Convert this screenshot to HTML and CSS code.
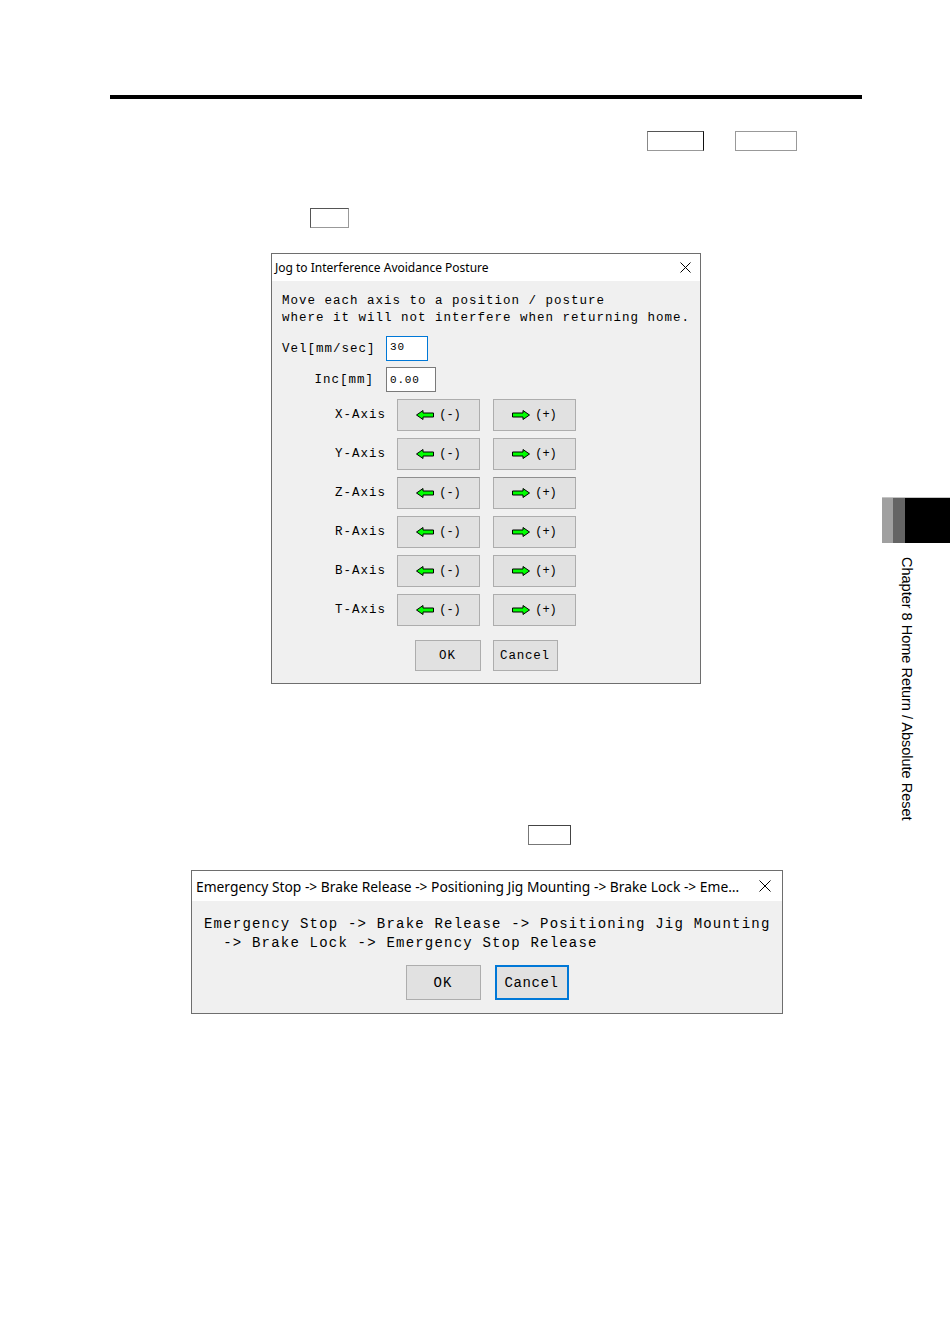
FILE: index.html
```html
<!DOCTYPE html>
<html lang="en">
<head>
    <meta charset="UTF-8">
    <title>Home Return / Absolute Reset</title>
    <link rel="stylesheet" href="styles.css">
</head>
<body>

<div class="page">
    <div class="content">
        <div class="top-rule"></div>

        <!-- key caps referenced in the text -->
        <div class="key-row row-1">
            <span class="key key-a"></span>
            <span class="key key-b"></span>
        </div>
        <div class="key-row row-2">
            <span class="key key-c"></span>
        </div>

        <!-- Jog dialog -->
        <div class="dialog jog-dialog">
            <div class="title-bar">
                <span class="title">Jog to Interference Avoidance Posture</span>
                <svg class="close" width="11" height="11" viewBox="0 0 11 11"><path d="M0.5 0.5L10.5 10.5M10.5 0.5L0.5 10.5" stroke="#000" stroke-width="1" fill="none"/></svg>
            </div>
            <div class="jog-body">
                <p class="message">Move each axis to a position / posture
where it will not interfere when returning home.</p>

                <div class="field">
                    <span class="field-label">Vel[mm/sec]</span>
                    <div class="input focused">30</div>
                </div>
                <div class="field">
                    <span class="field-label">Inc[mm]</span>
                    <div class="input wide">0.00</div>
                </div>

                <div class="axis-row">
                    <span class="axis-name">X-Axis</span>
                    <button class="jog-btn"><svg width="18" height="10" viewBox="0 0 18 10"><path d="M0.5 5L7 0.5V3H17.5V7H7V9.5Z" fill="#00ff00" stroke="#000"/></svg>(-)</button>
                    <button class="jog-btn"><svg width="18" height="10" viewBox="0 0 18 10"><path d="M17.5 5L11 0.5V3H0.5V7H11V9.5Z" fill="#00ff00" stroke="#000"/></svg>(+)</button>
                </div>
                <div class="axis-row">
                    <span class="axis-name">Y-Axis</span>
                    <button class="jog-btn"><svg width="18" height="10" viewBox="0 0 18 10"><path d="M0.5 5L7 0.5V3H17.5V7H7V9.5Z" fill="#00ff00" stroke="#000"/></svg>(-)</button>
                    <button class="jog-btn"><svg width="18" height="10" viewBox="0 0 18 10"><path d="M17.5 5L11 0.5V3H0.5V7H11V9.5Z" fill="#00ff00" stroke="#000"/></svg>(+)</button>
                </div>
                <div class="axis-row">
                    <span class="axis-name">Z-Axis</span>
                    <button class="jog-btn hot"><svg width="18" height="10" viewBox="0 0 18 10"><path d="M0.5 5L7 0.5V3H17.5V7H7V9.5Z" fill="#00ff00" stroke="#000"/></svg>(-)</button>
                    <button class="jog-btn hot"><svg width="18" height="10" viewBox="0 0 18 10"><path d="M17.5 5L11 0.5V3H0.5V7H11V9.5Z" fill="#00ff00" stroke="#000"/></svg>(+)</button>
                </div>
                <div class="axis-row">
                    <span class="axis-name">R-Axis</span>
                    <button class="jog-btn"><svg width="18" height="10" viewBox="0 0 18 10"><path d="M0.5 5L7 0.5V3H17.5V7H7V9.5Z" fill="#00ff00" stroke="#000"/></svg>(-)</button>
                    <button class="jog-btn"><svg width="18" height="10" viewBox="0 0 18 10"><path d="M17.5 5L11 0.5V3H0.5V7H11V9.5Z" fill="#00ff00" stroke="#000"/></svg>(+)</button>
                </div>
                <div class="axis-row">
                    <span class="axis-name">B-Axis</span>
                    <button class="jog-btn"><svg width="18" height="10" viewBox="0 0 18 10"><path d="M0.5 5L7 0.5V3H17.5V7H7V9.5Z" fill="#00ff00" stroke="#000"/></svg>(-)</button>
                    <button class="jog-btn"><svg width="18" height="10" viewBox="0 0 18 10"><path d="M17.5 5L11 0.5V3H0.5V7H11V9.5Z" fill="#00ff00" stroke="#000"/></svg>(+)</button>
                </div>
                <div class="axis-row">
                    <span class="axis-name">T-Axis</span>
                    <button class="jog-btn"><svg width="18" height="10" viewBox="0 0 18 10"><path d="M0.5 5L7 0.5V3H17.5V7H7V9.5Z" fill="#00ff00" stroke="#000"/></svg>(-)</button>
                    <button class="jog-btn"><svg width="18" height="10" viewBox="0 0 18 10"><path d="M17.5 5L11 0.5V3H0.5V7H11V9.5Z" fill="#00ff00" stroke="#000"/></svg>(+)</button>
                </div>

                <div class="jog-actions">
                    <button class="btn-ok">OK</button>
                    <button class="btn-cancel">Cancel</button>
                </div>
            </div>
        </div>

        <div class="key-row row-3">
            <span class="key key-d"></span>
        </div>

        <!-- Confirmation dialog -->
        <div class="dialog confirm-dialog">
            <div class="title-bar">
                <span class="title">Emergency Stop -&gt; Brake Release -&gt; Positioning Jig Mounting -&gt; Brake Lock -&gt; Eme…</span>
                <svg class="close" width="12" height="12" viewBox="0 0 12 12"><path d="M0.5 0.5L11.5 11.5M11.5 0.5L0.5 11.5" stroke="#000" stroke-width="1" fill="none"/></svg>
            </div>
            <div class="confirm-body">
                <p class="message">Emergency Stop -&gt; Brake Release -&gt; Positioning Jig Mounting
  -&gt; Brake Lock -&gt; Emergency Stop Release</p>
                <div class="confirm-actions">
                    <button class="btn-ok">OK</button>
                    <button class="btn-cancel focused">Cancel</button>
                </div>
            </div>
        </div>
    </div>

    <!-- chapter tab on the page edge -->
    <div class="side">
        <div class="tab">
            <span class="tab-light"></span>
            <span class="tab-mid"></span>
            <span class="tab-dark"></span>
        </div>
        <div class="chapter">Chapter 8 Home Return / Absolute Reset</div>
    </div>
</div>

</body>
</html>
```

FILE: styles.css
```css
* {
    margin: 0;
    padding: 0;
    box-sizing: border-box;
}

body {
    width: 950px;
    height: 1344px;
    background-color: #fff;
    color: #000;
    font-family: "Liberation Sans", Arial, sans-serif;
    overflow: hidden;
}

.page {
    display: flex;
}

.content {
    width: 752px;
    margin-left: 110px;
    padding-top: 95px;
}

.top-rule {
    height: 4px;
    background-color: #000;
}

/* key caps */
.key-row {
    display: flex;
    height: 20px;
}

.row-1 {
    margin-top: 32px;
    padding-left: 537px;
    gap: 31px;
}

.row-2 {
    margin-top: 57px;
    padding-left: 200px;
}

.row-3 {
    margin-top: 141px;
    padding-left: 418px;
}

.key {
    height: 20px;
    border: 1px solid #8c8c8c;
    background-color: #fff;
}

.key-a {
    width: 57px;
    border-color: #555 #111 #999 #888;
}

.key-b {
    width: 62px;
    border-color: #999;
}

.key-c {
    width: 39px;
    border-color: #555 #999 #999 #555;
}

.key-d {
    width: 43px;
    border-color: #444 #444 #777 #777;
}

/* dialogs */
.dialog {
    border: 1px solid #6e6e6e;
    background-color: #f0f0f0;
}

.jog-dialog {
    margin-top: 25px;
    margin-left: 161px;
    width: 430px;
}

.confirm-dialog {
    margin-top: 25px;
    margin-left: 81px;
    width: 592px;
}

.title-bar {
    display: flex;
    align-items: center;
    justify-content: space-between;
    background-color: #fff;
    font-family: "Noto Sans", sans-serif;
    white-space: nowrap;
}

.jog-dialog .title-bar {
    height: 27px;
    padding: 0 9px 0 3px;
    font-size: 12px;
}

.confirm-dialog .title-bar {
    height: 30px;
    padding: 0 11px 0 4px;
    font-size: 13.8px;
}

.message {
    white-space: pre;
}

button {
    font: inherit;
    letter-spacing: inherit;
    color: #000;
    background-color: #e1e1e1;
    border: 1px solid #adadad;
    display: flex;
    align-items: center;
    justify-content: center;
}

/* jog dialog body */
.jog-body {
    padding: 12px 10px 12px 10px;
    font-family: "Liberation Mono", monospace;
    font-size: 12.5px;
    letter-spacing: 1px;
}

.jog-body .message {
    line-height: 17px;
    margin-bottom: 9px;
}

.field {
    display: flex;
    align-items: center;
    height: 25px;
}

.field + .field {
    margin-top: 6px;
}

.field-label {
    width: 92px;
    margin-right: 12px;
    text-align: right;
}

.input {
    height: 25px;
    background-color: #fff;
    border: 1px solid #7a7a7a;
    font-size: 11px;
    letter-spacing: 0.8px;
    padding: 5px 0 0 3px;
    line-height: 12px;
}

.input.focused {
    width: 42px;
    border-color: #0078d7;
    padding-top: 4px;
}

.input.wide {
    width: 50px;
    padding-top: 6px;
}

.axis-row {
    display: flex;
    align-items: center;
    height: 32px;
    margin-top: 7px;
}

.axis-name {
    width: 104px;
    margin-right: 11px;
    text-align: right;
}

.jog-btn {
    width: 83px;
    height: 32px;
    gap: 5px;
    font-size: 12px;
    letter-spacing: 0;
}

.jog-btn + .jog-btn {
    margin-left: 13px;
}

.jog-btn.hot {
    border-top-color: #8f8f8f;
}

.jog-actions {
    display: flex;
    justify-content: center;
    gap: 12px;
    margin-top: 14px;
}

.jog-actions .btn-ok {
    width: 66px;
    height: 31px;
}

.jog-actions .btn-cancel {
    width: 65px;
    height: 31px;
    letter-spacing: 0.8px;
}

/* confirmation dialog body */
.confirm-body {
    padding: 14px 12px 13px 12px;
    font-family: "Liberation Mono", monospace;
    font-size: 14px;
    letter-spacing: 1.2px;
}

.confirm-body .message {
    line-height: 19px;
}

.confirm-actions {
    display: flex;
    justify-content: center;
    gap: 14px;
    margin-top: 12px;
}

.confirm-actions button {
    width: 75px;
    height: 35px;
}

.confirm-actions .btn-cancel {
    width: 74px;
    letter-spacing: 0.6px;
}

.confirm-actions .focused {
    border: 2px solid #0078d7;
}

/* chapter tab */
.side {
    width: 68px;
    margin-left: 20px;
    padding-top: 497px;
}

.tab {
    display: flex;
    height: 46px;
    border-top: 1px solid #c4c4c4;
}

.tab-light {
    width: 11px;
    background-color: #a0a0a0;
}

.tab-mid {
    width: 12px;
    background-color: #646464;
}

.tab-dark {
    flex: 1;
    background-color: #000;
}

.chapter {
    writing-mode: vertical-rl;
    margin: 14px 0 0 17px;
    font-size: 14.5px;
    line-height: 15px;
    white-space: nowrap;
}
```
